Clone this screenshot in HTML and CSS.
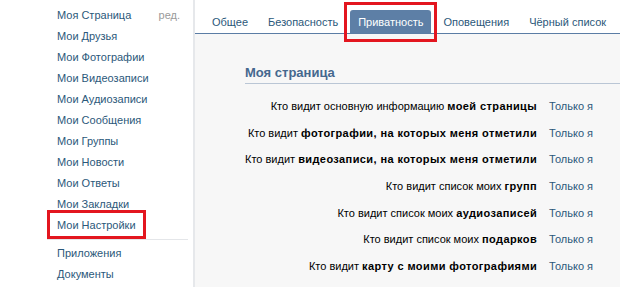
FILE: index.html
```html
<!DOCTYPE html>
<html lang="ru">
<head>
  <meta charset="UTF-8" />
  <title>Мои Настройки</title>
  <link rel="stylesheet" href="styles.css">
</head>
<body>
  <!-- Левое меню -->
  <div class="sidebar">
    <ul class="menu">
      <li class="menu-item"><a href="#">Моя Страница</a><span class="edit">ред.</span></li>
      <li class="menu-item"><a href="#">Мои Друзья</a></li>
      <li class="menu-item"><a href="#">Мои Фотографии</a></li>
      <li class="menu-item"><a href="#">Мои Видеозаписи</a></li>
      <li class="menu-item"><a href="#">Мои Аудиозаписи</a></li>
      <li class="menu-item"><a href="#">Мои Сообщения</a></li>
      <li class="menu-item"><a href="#">Мои Группы</a></li>
      <li class="menu-item"><a href="#">Мои Новости</a></li>
      <li class="menu-item"><a href="#">Мои Ответы</a></li>
      <li class="menu-item"><a href="#">Мои Закладки</a></li>
      <li class="menu-item marked"><a href="#">Мои Настройки</a><span class="mark"></span></li>
      <li class="menu-sep"></li>
      <li class="menu-item"><a href="#">Приложения</a></li>
      <li class="menu-item"><a href="#">Документы</a></li>
    </ul>
  </div>

  <!-- Настройки -->
  <div class="main">
    <div class="tabs">
      <a class="tab" href="#">Общее</a>
      <a class="tab" href="#">Безопасность</a>
      <a class="tab active" href="#">Приватность<span class="mark"></span></a>
      <a class="tab" href="#">Оповещения</a>
      <a class="tab" href="#">Чёрный список</a>
    </div>

    <div class="content">
      <h2 class="section-title">Моя страница</h2>
      <div class="rows">
        <div class="row"><span class="label">Кто видит основную информацию <b>моей страницы</b></span><a class="value" href="#">Только я</a></div>
        <div class="row"><span class="label">Кто видит <b>фотографии, на которых меня отметили</b></span><a class="value" href="#">Только я</a></div>
        <div class="row"><span class="label">Кто видит <b>видеозаписи, на которых меня отметили</b></span><a class="value" href="#">Только я</a></div>
        <div class="row"><span class="label">Кто видит список моих <b>групп</b></span><a class="value" href="#">Только я</a></div>
        <div class="row"><span class="label">Кто видит список моих <b>аудиозаписей</b></span><a class="value" href="#">Только я</a></div>
        <div class="row"><span class="label">Кто видит список моих <b>подарков</b></span><a class="value" href="#">Только я</a></div>
        <div class="row"><span class="label">Кто видит <b>карту с моими фотографиями</b></span><a class="value" href="#">Только я</a></div>
      </div>
    </div>
  </div>
</body>
</html>
```

FILE: styles.css
```css
body {
  margin: 0;
  padding: 0;
  display: flex;
  min-height: 100vh;
  font-family: "Liberation Sans", Arial, sans-serif;
  font-size: 11px;
  color: #000;
  background: #fff;
  overflow: hidden;
}
a {
  color: #2b587a;
  text-decoration: none;
}

/* левое меню */
.sidebar {
  width: 193px;
  flex-shrink: 0;
  border-right: 2px solid #e6e8eb;
}
.menu {
  list-style: none;
  margin: 0;
  padding: 5px 0 0 47px;
}
.menu-item {
  position: relative;
  display: flex;
  justify-content: space-between;
  width: 141px;
  box-sizing: border-box;
  padding: 0 8px 0 10px;
  line-height: 21px;
}
.edit {
  color: #9a9a9a;
}
.menu-sep {
  width: 141px;
  height: 1px;
  margin: 3px 0 3px;
  background: #e4e6e9;
}
.menu-item.marked .mark {
  position: absolute;
  left: 0;
  top: -5px;
  width: 99px;
  height: 29px;
  box-sizing: border-box;
  border: 3px solid #e3161f;
}

/* вкладки */
.main {
  flex: 1;
  display: flex;
  flex-direction: column;
  background: #f7f7f7;
}
.tabs {
  display: flex;
  align-items: flex-end;
  gap: 4px;
  height: 33px;
  padding-left: 9px;
  background: #fff;
  border-bottom: 1px solid #5b7da5;
}
.tab {
  position: relative;
  padding: 1px 8px 0;
  line-height: 22px;
  border-radius: 3px 3px 0 0;
  white-space: nowrap;
}
.tab.active {
  background: #5d7fa6;
  color: #fff;
}
.tab .mark {
  position: absolute;
  top: -8px;
  bottom: -9px;
  left: -6px;
  right: -6px;
  border: 3px solid #e3161f;
}

/* содержимое */
.content {
  padding: 31px 0 0 50px;
}
.section-title {
  margin: 0;
  padding-bottom: 2px;
  font-size: 13px;
  line-height: 16px;
  font-weight: bold;
  color: #45688e;
  border-bottom: 1px solid #bac6d5;
}
.rows {
  margin-top: 9px;
}
.row {
  display: grid;
  grid-template-columns: 1fr 73px;
  column-gap: 12px;
  line-height: 26.67px;
  white-space: nowrap;
}
.label {
  text-align: right;
}
.label b {
  letter-spacing: 0.4px;
}
```
